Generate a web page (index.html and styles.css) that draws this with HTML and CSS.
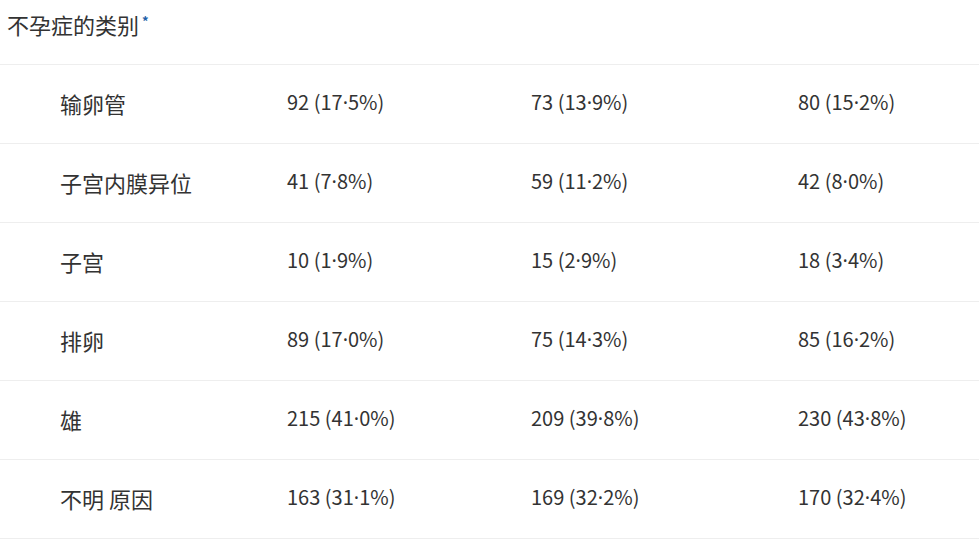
FILE: index.html
```html
<!DOCTYPE html>
<html lang="zh">
<head>
<meta charset="utf-8">
<link rel="stylesheet" href="styles.css">
</head>
<body>
<div class="page">
  <div class="title">不孕症的类别<sup class="star">*</sup></div>
  <div class="table">
    <div class="row"><div class="cell label">输卵管</div><div class="cell">92 (17<span class="dot">·</span>5%)</div><div class="cell">73 (13<span class="dot">·</span>9%)</div><div class="cell">80 (15<span class="dot">·</span>2%)</div></div>
    <div class="row"><div class="cell label">子宫内膜异位</div><div class="cell">41 (7<span class="dot">·</span>8%)</div><div class="cell">59 (11<span class="dot">·</span>2%)</div><div class="cell">42 (8<span class="dot">·</span>0%)</div></div>
    <div class="row"><div class="cell label">子宫</div><div class="cell">10 (1<span class="dot">·</span>9%)</div><div class="cell">15 (2<span class="dot">·</span>9%)</div><div class="cell">18 (3<span class="dot">·</span>4%)</div></div>
    <div class="row"><div class="cell label">排卵</div><div class="cell">89 (17<span class="dot">·</span>0%)</div><div class="cell">75 (14<span class="dot">·</span>3%)</div><div class="cell">85 (16<span class="dot">·</span>2%)</div></div>
    <div class="row"><div class="cell label">雄</div><div class="cell">215 (41<span class="dot">·</span>0%)</div><div class="cell">209 (39<span class="dot">·</span>8%)</div><div class="cell">230 (43<span class="dot">·</span>8%)</div></div>
    <div class="row"><div class="cell label">不明 原因</div><div class="cell">163 (31<span class="dot">·</span>1%)</div><div class="cell">169 (32<span class="dot">·</span>2%)</div><div class="cell">170 (32<span class="dot">·</span>4%)</div></div>
  </div>
</div>
</body>
</html>
```
FILE: styles.css
```css
html, body {
  margin: 0;
  padding: 0;
  background: #fff;
}
body {
  font-family: "Noto Sans CJK SC", "Noto Sans", sans-serif;
  color: #333;
}
.page {
  width: 979px;
}
.title {
  height: 65px;
  box-sizing: border-box;
  padding: 9px 0 0 7px;
  font-size: 22px;
  line-height: 30px;
  border-bottom: 1px solid #eeeeee;
}
.star {
  color: #1f5fa8;
  font-size: 13px;
  font-weight: bold;
  line-height: 14px;
  vertical-align: top;
  position: relative;
  top: 5px;
  margin-left: 3px;
}
.row {
  display: grid;
  grid-template-columns: 287px 244px 267px 181px;
  height: 79px;
  box-sizing: border-box;
  border-bottom: 1px solid #eeeeee;
  align-items: center;
}
.cell {
  font-size: 20px;
  line-height: 28px;
  padding-bottom: 3px;
}
.dot {
  font-family: "Noto Sans", sans-serif;
}
.label {
  padding-left: 60px;
  font-size: 22px;
}
```
